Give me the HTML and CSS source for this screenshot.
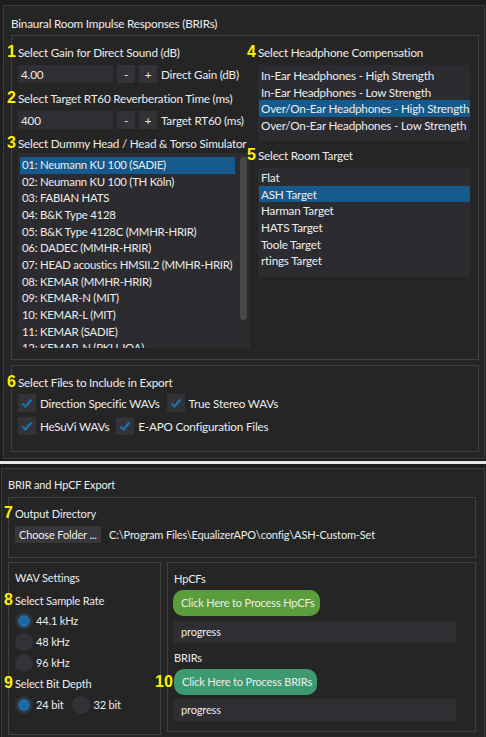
FILE: index.html
```html
<!DOCTYPE html>
<html>
<head>
<meta charset="utf-8">
<link rel="stylesheet" href="styles.css">
</head>
<body>
<div class="shot shot-top">
  <div class="win win-top">
    <div class="wtitle">Binaural Room Impulse Responses (BRIRs)</div>
    <div class="group g1">
      <div class="col col-left">
        <div class="lbl l1"><span class="num">1</span>Select Gain for Direct Sound (dB)</div>
        <div class="spin s1">
          <div class="field">4.00</div>
          <div class="sbtn">-</div>
          <div class="sbtn">+</div>
          <span class="slbl">Direct Gain (dB)</span>
        </div>
        <div class="lbl l2"><span class="num">2</span>Select Target RT60 Reverberation Time (ms)</div>
        <div class="spin s2">
          <div class="field">400</div>
          <div class="sbtn">-</div>
          <div class="sbtn">+</div>
          <span class="slbl">Target RT60 (ms)</span>
        </div>
        <div class="lbl l3"><span class="num">3</span>Select Dummy Head / Head &amp; Torso Simulator</div>
        <div class="list list-hrtf">
          <div class="items">
            <div class="item sel">01: Neumann KU 100 (SADIE)</div>
            <div class="item">02: Neumann KU 100 (TH Köln)</div>
            <div class="item">03: FABIAN HATS</div>
            <div class="item">04: B&amp;K Type 4128</div>
            <div class="item">05: B&amp;K Type 4128C (MMHR-HRIR)</div>
            <div class="item">06: DADEC (MMHR-HRIR)</div>
            <div class="item">07: HEAD acoustics HMSII.2 (MMHR-HRIR)</div>
            <div class="item">08: KEMAR (MMHR-HRIR)</div>
            <div class="item">09: KEMAR-N (MIT)</div>
            <div class="item">10: KEMAR-L (MIT)</div>
            <div class="item">11: KEMAR (SADIE)</div>
            <div class="item">12: KEMAR-N (PKU-IOA)</div>
          </div>
          <div class="scroll"><div class="thumb"></div></div>
        </div>
      </div>
      <div class="col col-right">
        <div class="lbl l4"><span class="num">4</span>Select Headphone Compensation</div>
        <div class="list list-hp">
          <div class="item">In-Ear Headphones - High Strength</div>
          <div class="item">In-Ear Headphones - Low Strength</div>
          <div class="item sel">Over/On-Ear Headphones - High Strength</div>
          <div class="item">Over/On-Ear Headphones - Low Strength</div>
        </div>
        <div class="lbl l5"><span class="num">5</span>Select Room Target</div>
        <div class="list list-room">
          <div class="item">Flat</div>
          <div class="item sel">ASH Target</div>
          <div class="item">Harman Target</div>
          <div class="item">HATS Target</div>
          <div class="item">Toole Target</div>
          <div class="item">rtings Target</div>
        </div>
      </div>
    </div>
    <div class="group g2">
      <div class="lbl l6"><span class="num">6</span>Select Files to Include in Export</div>
      <div class="crow">
        <span class="cb"><svg viewBox="0 0 18 18" width="18" height="18"><polyline points="4.5,9.5 7.5,12.5 13.5,5.5" fill="none" stroke="#1f72b4" stroke-width="2.2"/></svg></span>
        <span class="ctext">Direction Specific WAVs</span>
        <span class="cb"><svg viewBox="0 0 18 18" width="18" height="18"><polyline points="4.5,9.5 7.5,12.5 13.5,5.5" fill="none" stroke="#1f72b4" stroke-width="2.2"/></svg></span>
        <span class="ctext">True Stereo WAVs</span>
      </div>
      <div class="crow">
        <span class="cb"><svg viewBox="0 0 18 18" width="18" height="18"><polyline points="4.5,9.5 7.5,12.5 13.5,5.5" fill="none" stroke="#1f72b4" stroke-width="2.2"/></svg></span>
        <span class="ctext">HeSuVi WAVs</span>
        <span class="cb"><svg viewBox="0 0 18 18" width="18" height="18"><polyline points="4.5,9.5 7.5,12.5 13.5,5.5" fill="none" stroke="#1f72b4" stroke-width="2.2"/></svg></span>
        <span class="ctext">E-APO Configuration Files</span>
      </div>
    </div>
  </div>
</div>
<div class="sep"></div>
<div class="shot shot-bottom">
  <div class="win win-bottom">
    <div class="wtitle wtitle2">BRIR and HpCF Export</div>
    <div class="group g7">
      <div class="lbl l7"><span class="num">7</span>Output Directory</div>
      <div class="dirrow">
        <div class="fbtn">Choose Folder ...</div>
        <span class="path">C:\Program Files\EqualizerAPO\config\ASH-Custom-Set</span>
      </div>
    </div>
    <div class="row2">
      <div class="group gwav">
        <div class="lbl">WAV Settings</div>
        <div class="lbl l8"><span class="num">8</span>Select Sample Rate</div>
        <div class="rrow"><span class="rb on"></span><span class="rtext">44.1 kHz</span></div>
        <div class="rrow"><span class="rb"></span><span class="rtext">48 kHz</span></div>
        <div class="rrow"><span class="rb"></span><span class="rtext">96 kHz</span></div>
        <div class="lbl l9"><span class="num">9</span>Select Bit Depth</div>
        <div class="rrow"><span class="rb on"></span><span class="rtext">24 bit</span><span class="rb"></span><span class="rtext">32 bit</span></div>
      </div>
      <div class="group ghp">
        <div class="lbl">HpCFs</div>
        <div class="brow"><div class="pbtn green">Click Here to Process HpCFs</div></div>
        <div class="prog">progress</div>
        <div class="lbl lb2">BRIRs</div>
        <div class="brow"><span class="num num10">10</span><div class="pbtn teal">Click Here to Process BRIRs</div></div>
        <div class="prog prog2">progress</div>
      </div>
    </div>
  </div>
</div>
</body>
</html>
```

FILE: styles.css
```css
* { box-sizing: border-box; }
html, body { margin: 0; padding: 0; }
body {
  width: 486px;
  height: 737px;
  overflow: hidden;
  background: #1d1d1d;
  font-family: Lato, "Open Sans", sans-serif;
  font-size: 11.7px;
  letter-spacing: -0.2px;
  color: #ececec;
}
.shot { overflow: hidden; }
.shot-top { height: 461px; padding: 5px 0 0 3px; }
.sep { height: 3px; background: #e6e6e6; }
.shot-bottom { height: 273px; padding: 4px 0 0 1px; font-size: 11px; letter-spacing: -0.15px; }

.win {
  background: #252526;
  border: 1px solid #3c3c3c;
}
.win-top { width: 482px; height: 454px; padding: 9px 5px 0 7px; }
.win-bottom { width: 484px; height: 290px; padding: 7px 8px 0 6px; }

.wtitle { line-height: 16px; height: 16px; }
.wtitle2 { height: 18px; line-height: 18px; }

.group { border: 1px solid #404040; }
.g1 { margin-top: 4px; height: 325px; padding: 7px 0 0 6px; display: flex; gap: 8px; }
.g2 { margin-top: 5px; height: 87px; padding: 7px 0 0 6px; }

.lbl { line-height: 18px; height: 18px; white-space: nowrap; display: flex; align-items: baseline; }
.num {
  display: inline-block;
  flex: none;
  width: 11px;
  margin-left: -11px;
  font-family: "Liberation Sans", Arial, sans-serif;
  font-weight: bold;
  font-size: 16px;
  letter-spacing: 0;
  color: #fff000;
}

.col { display: flex; flex-direction: column; }
.col-left { width: 232px; }
.col-right { width: 212px; }

.l1 { margin-bottom: 4px; }
.s1 { margin-bottom: 6px; }
.l2 { margin-bottom: 4px; }
.s2 { margin-bottom: 5px; }
.l3 { margin-bottom: 1px; }

.spin { display: flex; align-items: center; height: 18px; }
.field {
  width: 95px; height: 18px; line-height: 18px;
  background: #2f2f33; padding-left: 3px;
}
.sbtn {
  width: 18px; height: 18px; line-height: 18px; text-align: center;
  background: #333337; margin-left: 4px;
}
.slbl { margin-left: 4px; white-space: nowrap; }

.list { background: #2c2c30; }
.item { height: 16.67px; line-height: 16.67px; padding-left: 2px; white-space: nowrap; overflow: hidden; }
.item.sel { background: #155a8c; }

.list-hrtf { height: 195px; display: flex; padding: 4px 0 0 2px; overflow: hidden; }
.list-hrtf .items { width: 215px; flex: none; font-size: 11.4px; letter-spacing: -0.25px; }
.scroll { margin-left: 5px; width: 7px; flex: none; }
.thumb { height: 163px; background: #48484c; border-radius: 4px; }

.list-hp { height: 76px; margin-top: 4px; padding: 2px 0 0 1px; }
.l5 { margin-top: 5px; }
.list-room { height: 109px; margin-top: 4px; padding: 1px 0 0 1px; }

.l6 { margin-bottom: 3px; }
.crow { display: flex; align-items: center; height: 18px; margin-bottom: 5px; }
.cb { width: 18px; height: 18px; background: #333337; display: block; flex: none; }
.cb svg { display: block; }
.ctext { margin: 0 7px 0 4px; white-space: nowrap; }

.g7 { margin-top: 3px; width: 468px; height: 61px; padding: 6px 0 0 6px; }
.l7 { margin-bottom: 4px; }
.dirrow { display: flex; align-items: center; }
.fbtn { height: 17px; line-height: 17px; background: #38383c; padding: 0 4px; width: 86px; white-space: nowrap; }
.path { margin-left: 8px; white-space: nowrap; }

.row2 { display: flex; gap: 6px; margin-top: 4px; }
.gwav { width: 153px; height: 173px; padding: 6px 0 0 6px; }
.ghp { width: 309px; height: 170px; padding: 7px 0 0 6px; }

.l8 { margin-top: 4px; margin-bottom: 1px; }
.l9 { margin-top: 1px; margin-bottom: 2px; }
.rrow { display: flex; align-items: center; height: 21px; }
.rb {
  width: 18px; height: 18px; border-radius: 50%;
  background: #333337; position: relative; flex: none;
}
.rb.on::after {
  content: ""; position: absolute; left: 3px; top: 3px;
  width: 12px; height: 12px; border-radius: 50%; background: #1e6aa6;
}
.rtext { margin: 0 9px 0 3px; white-space: nowrap; }

.brow { display: flex; align-items: center; margin-top: 2px; }
.pbtn { height: 26px; line-height: 26px; padding: 0 8px; border-radius: 10px; white-space: nowrap; }
.green { background: #5a9d3b; margin-left: -1px; width: 147px; }
.teal { background: #3d9a70; width: 143px; }
.prog { width: 282px; height: 22px; line-height: 22px; background: #2e2e33; padding-left: 7px; margin-top: 5px; }
.lb2 { margin-top: 6px; }
.prog2 { margin-top: 4px; }
.num10 { width: 19px; margin-left: -19px; }
```
